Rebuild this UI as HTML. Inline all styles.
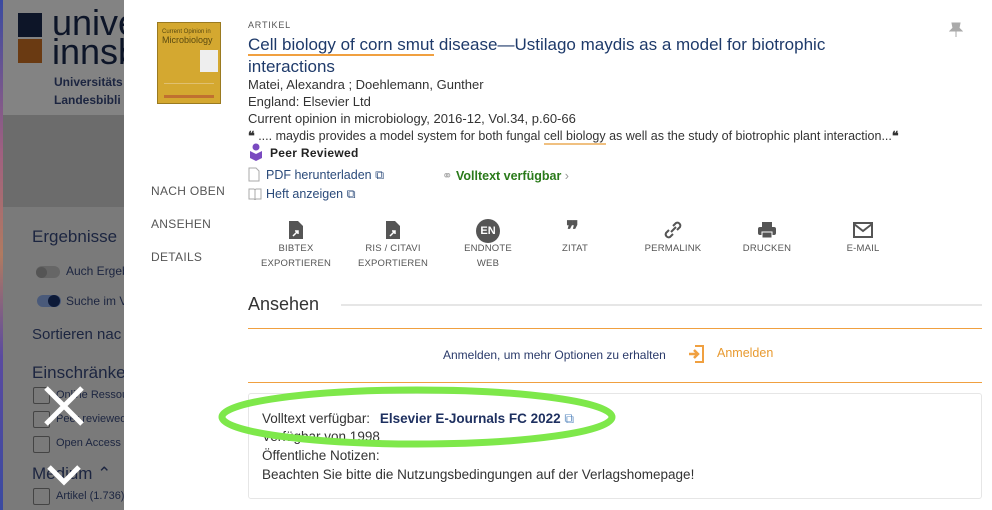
<!DOCTYPE html>
<html><head><meta charset="utf-8"><style>
*{margin:0;padding:0;box-sizing:border-box}
body{width:992px;height:510px;overflow:hidden;position:relative;font-family:"Liberation Sans",sans-serif;background:#777}
.a{position:absolute;white-space:nowrap}
.lg{color:#1c2540}
.nav{color:#555;font-size:12px;letter-spacing:.3px}
.ic{color:#555;font-size:9.5px;text-align:center;line-height:15px;letter-spacing:.2px}
.b{color:#333;font-size:13px}
</style></head><body>
<div class="a" style="left:0;top:0;width:124px;height:115px;background:#838383"></div>
<div class="a" style="left:0;top:115px;width:124px;height:92px;background:#6c6c6c"></div>
<div class="a" style="left:0;top:207px;width:124px;height:303px;background:#7a7a7a"></div>
<div class="a" style="left:0;top:0;width:3px;height:510px;background:linear-gradient(#3a4aa0,#a06080 30%,#b07a60 50%,#5a4aa0 70%,#3a4aa0)"></div>
<div class="a" style="left:18px;top:13px;width:24px;height:24px;background:#0d1528"></div>
<div class="a" style="left:18px;top:39px;width:24px;height:24px;background:#6a3a12"></div>
<div class="a" style="left:52px;top:8px;font-size:36px;line-height:29px;color:#0d1528">unive<br>innsb</div>
<div class="a" style="left:54px;top:73px;font-size:12px;font-weight:bold;color:#1c2540;line-height:18px">Universitäts<br>Landesbibli</div>
<div class="a lg" style="left:32px;top:227px;font-size:17px">Ergebnisse</div>
<div class="a" style="left:36px;top:266px;width:24px;height:12px;border-radius:6px;background:#666"></div>
<div class="a" style="left:36px;top:267px;width:11px;height:11px;border-radius:50%;background:#555"></div>
<div class="a lg" style="left:66px;top:264px;font-size:12px">Auch Ergeb</div>
<div class="a" style="left:37px;top:295px;width:24px;height:12px;border-radius:6px;background:#4a5a7a"></div>
<div class="a" style="left:48px;top:295px;width:12px;height:12px;border-radius:50%;background:#0d1a38"></div>
<div class="a lg" style="left:66px;top:294px;font-size:12px">Suche im V</div>
<div class="a lg" style="left:32px;top:326px;font-size:15px">Sortieren nac</div>
<div class="a lg" style="left:32px;top:363px;font-size:17px">Einschränke</div>
<div class="a" style="left:33px;top:387px;width:17px;height:17px;border:1px solid #444;border-radius:2px"></div>
<div class="a lg" style="left:56px;top:389px;font-size:11px">Online Ressou</div>
<div class="a" style="left:33px;top:411px;width:17px;height:17px;border:1px solid #444;border-radius:2px"></div>
<div class="a lg" style="left:56px;top:413px;font-size:11px">Peer reviewed</div>
<div class="a" style="left:33px;top:436px;width:17px;height:17px;border:1px solid #444;border-radius:2px"></div>
<div class="a lg" style="left:56px;top:437px;font-size:11px">Open Access</div>
<div class="a lg" style="left:32px;top:464px;font-size:17px">Medium ⌃</div>
<div class="a" style="left:33px;top:488px;width:17px;height:17px;border:1px solid #444;border-radius:2px"></div>
<div class="a lg" style="left:56px;top:490px;font-size:11px">Artikel (1.736)</div>
<svg class="a" style="left:42px;top:384px" width="44" height="44"><path d="M4 4L40 40M40 4L4 40" stroke="#fff" stroke-width="5"/></svg>
<svg class="a" style="left:46px;top:464px" width="36" height="24"><path d="M3 3L18 18L33 3" stroke="#fff" stroke-width="5" fill="none"/></svg>

<div class="a" style="left:124px;top:0;width:868px;height:510px;background:#fff"></div>
<div class="a" style="left:157px;top:22px;width:64px;height:82px;background:#d4a830;border:1px solid #9a7a20">
 <div style="margin:6px 4px 0;font-size:6px;color:#5a4a10">Current Opinion in</div>
 <div style="margin:0 4px;font-size:9px;color:#5a4a10">Microbiology</div>
 <div style="position:absolute;left:42px;top:27px;width:18px;height:22px;background:#eee"></div>
 <div style="position:absolute;left:6px;top:60px;width:50px;height:1px;background:#e0c070"></div>
 <div style="position:absolute;left:6px;top:72px;width:50px;height:3px;background:#c07030"></div>
</div>
<div class="a nav" style="left:151px;top:184px">NACH OBEN</div>
<div class="a nav" style="left:151px;top:217px">ANSEHEN</div>
<div class="a nav" style="left:151px;top:250px">DETAILS</div>

<div class="a" style="left:248px;top:20px;font-size:9px;color:#555;letter-spacing:.8px">ARTIKEL</div>
<div class="a" style="left:248px;top:34px;font-size:17px;color:#1e3a6a;line-height:22px;white-space:normal;width:600px"><span style="border-bottom:2px solid #f0a040">Cell biology of corn smut</span> disease—Ustilago maydis as a model for biotrophic interactions</div>
<svg class="a" style="left:949px;top:22px" width="14" height="16"><path d="M3 1h8l-1 5 3 3H1l3-3zM7 9v6" fill="#aaa" stroke="#aaa"/></svg>
<div class="a b" style="left:248px;top:77px">Matei, Alexandra ; Doehlemann, Gunther</div>
<div class="a b" style="left:248px;top:94px">England: Elsevier Ltd</div>
<div class="a b" style="left:248px;top:111px">Current opinion in microbiology, 2016-12, Vol.34, p.60-66</div>
<div class="a" style="left:248px;top:128px;font-size:12.5px;color:#333"><b>❝</b> .... maydis provides a model system for both fungal <span style="border-bottom:2px solid #f0c080">cell biology</span> as well as the study of biotrophic plant interaction...<b>❝</b></div>
<svg class="a" style="left:249px;top:143px" width="14" height="18"><circle cx="7" cy="4" r="3.5" fill="#7a4ac0"/><path d="M1 8l6 3 6-3v7l-6 3-6-3z" fill="#7a4ac0"/></svg>
<div class="a" style="left:270px;top:146px;font-size:12px;color:#222;font-weight:bold;letter-spacing:.3px">Peer Reviewed</div>
<svg class="a" style="left:248px;top:167px" width="12" height="15"><path d="M1 1h7l3 3v10H1z" fill="none" stroke="#aaa"/></svg>
<div class="a" style="left:266px;top:168px;font-size:12.5px;color:#2a4a7a">PDF herunterladen ⧉</div>
<div class="a" style="left:442px;top:168px;font-size:12.5px;color:#2a7a1a;font-weight:bold"><span style="color:#aaa;font-weight:normal">⚭</span> Volltext verfügbar <span style="color:#999;font-weight:normal">›</span></div>
<svg class="a" style="left:248px;top:187px" width="14" height="13"><path d="M1 2h5l1 1 1-1h5v10H8l-1 1-1-1H1zM7 3v9" fill="none" stroke="#aaa"/></svg>
<div class="a" style="left:266px;top:187px;font-size:12.5px;color:#2a4a7a">Heft anzeigen ⧉</div>

<svg class="a" style="left:288px;top:220px" width="16" height="20"><path d="M1 1h9l5 5v13H1z" fill="#555"/><path d="M5 16l5-5M7 11h3v3" stroke="#fff" stroke-width="1.5" fill="none"/></svg>
<div class="a ic" style="left:256px;top:241px;width:80px">BIBTEX<br>EXPORTIEREN</div>
<svg class="a" style="left:385px;top:220px" width="16" height="20"><path d="M1 1h9l5 5v13H1z" fill="#555"/><path d="M5 16l5-5M7 11h3v3" stroke="#fff" stroke-width="1.5" fill="none"/></svg>
<div class="a ic" style="left:353px;top:241px;width:80px">RIS / CITAVI<br>EXPORTIEREN</div>
<div class="a" style="left:476px;top:219px;width:24px;height:24px;border-radius:50%;background:#555;color:#fff;font-size:11px;font-weight:bold;text-align:center;line-height:24px">EN</div>
<div class="a ic" style="left:448px;top:241px;width:80px">ENDNOTE<br>WEB</div>
<div class="a" style="left:566px;top:218px;font-size:24px;font-weight:bold;color:#555;line-height:26px">❞</div>
<div class="a ic" style="left:535px;top:241px;width:80px">ZITAT</div>
<svg class="a" style="left:663px;top:220px" width="20" height="20"><path d="M8 12l5-5M6 10l-3 3a3 3 0 0 0 4 4l3-3M14 10l3-3a3 3 0 0 0-4-4l-3 3" stroke="#555" stroke-width="2" fill="none"/></svg>
<div class="a ic" style="left:633px;top:241px;width:80px">PERMALINK</div>
<svg class="a" style="left:757px;top:221px" width="20" height="18"><rect x="5" y="1" width="10" height="5" fill="#555"/><rect x="1" y="6" width="18" height="8" rx="2" fill="#555"/><rect x="5" y="11" width="10" height="6" fill="#555" stroke="#fff"/></svg>
<div class="a ic" style="left:727px;top:241px;width:80px">DRUCKEN</div>
<svg class="a" style="left:853px;top:222px" width="20" height="16"><rect x="1" y="1" width="18" height="14" fill="none" stroke="#555" stroke-width="2"/><path d="M1 2l9 7 9-7" stroke="#555" stroke-width="2" fill="none"/></svg>
<div class="a ic" style="left:823px;top:241px;width:80px">E-MAIL</div>

<div class="a" style="left:248px;top:294px;font-size:18px;color:#333">Ansehen</div>
<div class="a" style="left:341px;top:304px;width:641px;height:2px;background:#e6e6e6"></div>
<div class="a" style="left:248px;top:328px;width:734px;height:55px;border-top:1px solid #f0a040;border-bottom:1px solid #f0a040"></div>
<div class="a" style="left:443px;top:348px;font-size:12px;color:#2a3a6a">Anmelden, um mehr Optionen zu erhalten</div>
<svg class="a" style="left:688px;top:345px" width="16" height="18"><path d="M7 1h8v16H7" stroke="#f0a040" stroke-width="2" fill="none"/><path d="M1 9h8M6 5l4 4-4 4" stroke="#f0a040" stroke-width="2.5" fill="none"/></svg>
<div class="a" style="left:717px;top:346px;font-size:12.5px;color:#e89a30">Anmelden</div>
<div class="a" style="left:248px;top:393px;width:734px;height:106px;border:1px solid #e6e6e6;border-radius:3px"></div>
<div class="a b" style="left:262px;top:411px;font-size:13.5px">Volltext verfügbar: <b style="color:#1e3060;margin-left:6px">Elsevier E-Journals FC 2022</b> <span style="color:#5a8ac0">⧉</span></div>
<div class="a b" style="left:262px;top:429px;font-size:13.5px">Verfügbar von 1998</div>
<div class="a b" style="left:262px;top:448px;font-size:13.5px">Öffentliche Notizen:</div>
<div class="a b" style="left:262px;top:467px;font-size:13.5px">Beachten Sie bitte die Nutzungsbedingungen auf der Verlagshomepage!</div>
<svg class="a" style="left:215px;top:383px" width="410" height="68"><ellipse cx="202" cy="34" rx="195" ry="27" fill="none" stroke="#7ee84a" stroke-width="7"/></svg>
</body></html>
